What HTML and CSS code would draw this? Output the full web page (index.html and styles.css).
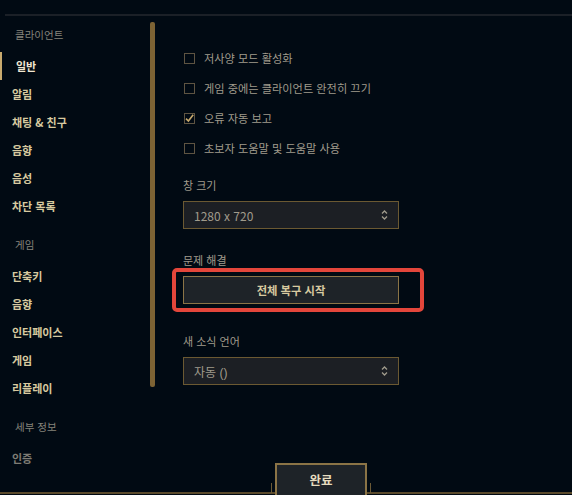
FILE: index.html
```html
<!DOCTYPE html>
<html lang="ko">
<head>
<meta charset="utf-8">
<link rel="stylesheet" href="styles.css">
</head>
<body>
<div class="topline"></div>
<div class="main">
  <nav class="sidebar">
    <div class="group-title">클라이언트</div>
    <div class="nav-item active">일반</div>
    <div class="nav-item">알림</div>
    <div class="nav-item">채팅 &amp; 친구</div>
    <div class="nav-item">음향</div>
    <div class="nav-item">음성</div>
    <div class="nav-item">차단 목록</div>
    <div class="group-title spaced">게임</div>
    <div class="nav-item">단축키</div>
    <div class="nav-item">음향</div>
    <div class="nav-item">인터페이스</div>
    <div class="nav-item">게임</div>
    <div class="nav-item">리플레이</div>
    <div class="group-title spaced">세부 정보</div>
    <div class="nav-item dim">인증</div>
  </nav>
  <div class="scrollbar"></div>
  <section class="content">
    <div class="check-row"><span class="box"></span><span class="check-label">저사양 모드 활성화</span></div>
    <div class="check-row"><span class="box"></span><span class="check-label">게임 중에는 클라이언트 완전히 끄기</span></div>
    <div class="check-row"><span class="box checked"><svg viewBox="0 0 11 11" width="11" height="11"><path d="M2 5.6 L4.4 8 L9.2 1.8" fill="none" stroke="#c8aa6e" stroke-width="1.6"/></svg></span><span class="check-label">오류 자동 보고</span></div>
    <div class="check-row"><span class="box"></span><span class="check-label">초보자 도움말 및 도움말 사용</span></div>

    <div class="field-label first">창 크기</div>
    <div class="select">
      <span class="select-text">1280 x 720</span>
      <svg class="arrows" viewBox="0 0 7 12" width="7" height="12"><path d="M1 4.5 L3.5 2 L6 4.5 M1 7.5 L3.5 10 L6 7.5" fill="none" stroke="#a09b8c" stroke-width="1.3"/></svg>
    </div>

    <div class="field-label">문제 해결</div>
    <div class="btn-wrap">
      <div class="action-btn">전체 복구 시작</div>
      <div class="highlight"></div>
    </div>

    <div class="field-label lang">새 소식 언어</div>
    <div class="select">
      <span class="select-text">자동 <span class="paren">()</span></span>
      <svg class="arrows" viewBox="0 0 7 12" width="7" height="12"><path d="M1 4.5 L3.5 2 L6 4.5 M1 7.5 L3.5 10 L6 7.5" fill="none" stroke="#a09b8c" stroke-width="1.3"/></svg>
    </div>
  </section>
</div>
<footer class="footer">
  <div class="done-wrap"><div class="done">완료</div></div>
</footer>
</body>
</html>
```
FILE: styles.css
```css
* { box-sizing: border-box; }
html, body {
  margin: 0;
  padding: 0;
  width: 572px;
  height: 495px;
  overflow: hidden;
  background: #010a13;
  font-family: "Noto Sans CJK KR", "Noto Sans", sans-serif;
}
.topline {
  margin: 14px 0 0 5px;
  height: 2px;
  background: #1b2027;
}
.main {
  display: flex;
  height: 447px;
}
.sidebar {
  width: 150px;
  padding-top: 5px;
  display: flex;
  flex-direction: column;
}
.group-title {
  height: 28px;
  line-height: 28px;
  margin-bottom: 3px;
  padding-left: 15px;
  font-size: 10.5px;
  color: #85837b;
}
.group-title.spaced { margin-top: 11px; }
.nav-item {
  position: relative;
  height: 28px;
  line-height: 28px;
  padding-left: 12px;
  font-size: 11px;
  font-weight: 700;
  color: #d8caa0;
}
.nav-item.active {
  padding-left: 16px;
  color: #f0e6d2;
}
.nav-item.active::before {
  content: "";
  position: absolute;
  left: 0;
  top: 0;
  width: 2px;
  height: 28px;
  background: #c8aa6e;
}
.nav-item.dim {
  color: #7e7c74;
}
.scrollbar {
  margin-top: 6px;
  width: 5px;
  height: 365px;
  border-radius: 2px;
  background: #7d6334;
}
.content {
  padding: 27px 0 0 28px;
  display: flex;
  flex-direction: column;
}
.check-row {
  height: 30px;
  display: flex;
  align-items: center;
}
.box {
  width: 11px;
  height: 11px;
  margin-left: 1px;
  border: 1px solid #5e5442;
  position: relative;
  display: block;
}
.box svg {
  position: absolute;
  left: -1px;
  top: -1px;
}
.check-label {
  margin-left: 9px;
  font-size: 11.2px;
  color: #a09b8c;
}
.field-label {
  height: 16px;
  line-height: 16px;
  margin-top: 23px;
  margin-bottom: 8px;
  font-size: 11px;
  color: #a09b8c;
}
.field-label.first { margin-top: 14px; }
.field-label.lang { margin-top: 29px; }
.select {
  width: 216px;
  height: 28px;
  background: #1c1f24;
  border: 1px solid #6b5932;
  display: flex;
  align-items: center;
  justify-content: space-between;
  padding: 0 10px 0 10px;
}
.select-text {
  font-size: 12px;
  color: #a09b8c;
}
.paren {
  font-family: "Liberation Sans", sans-serif;
  font-weight: 300;
}
.btn-wrap {
  position: relative;
  width: 216px;
}
.action-btn {
  height: 28px;
  line-height: 26px;
  background: #1e2328;
  border: 1px solid #8b7446;
  text-align: center;
  font-size: 11.3px;
  font-weight: 700;
  color: #d8caa0;
}
.highlight {
  position: absolute;
  top: -8px;
  left: -11px;
  right: -25px;
  bottom: -8px;
  border: 4px solid #e3463b;
  border-radius: 5px;
}
.footer {
  position: relative;
  height: 32px;
}
.footer::before {
  content: "";
  position: absolute;
  left: 0;
  right: 0;
  bottom: 1px;
  height: 2px;
  background: #5a4a2b;
}
.done-wrap {
  position: relative;
  margin-left: 275px;
  width: 92px;
  height: 32px;
}
.done-wrap::before,
.done-wrap::after {
  content: "";
  position: absolute;
  bottom: 2px;
  width: 1px;
  height: 10px;
  background: #6b5a36;
}
.done-wrap::before { left: -4px; }
.done-wrap::after { right: -4px; }
.done {
  position: relative;
  height: 32px;
  line-height: 30px;
  background: #1e2328;
  border: 2px solid #8b7446;
  border-bottom: none;
  text-align: center;
  font-size: 12.5px;
  font-weight: 700;
  color: #e6dcbf;
}
```
